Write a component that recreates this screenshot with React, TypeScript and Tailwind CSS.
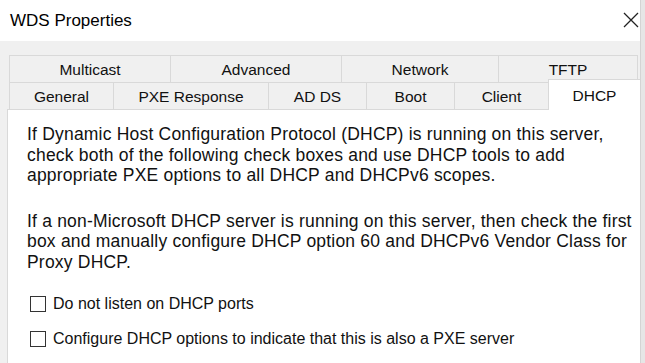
import React from "react";

const Tab = ({ label, w, last }: { label: string; w: string; last?: boolean }) => (
  <div
    className={`${w} h-full flex items-center justify-center border-t border-l border-[#d9d9d9] bg-[#f0f0f0] text-[15.5px] text-[#111] ${last ? "border-r" : ""}`}
  >
    <span className="pt-[1px]">{label}</span>
  </div>
);

const CheckRow = ({ label }: { label: string }) => (
  <div className="flex items-center h-[20px]">
    <div className="w-[16px] h-[16px] border border-[#333] bg-white shrink-0" />
    <span className="ml-[7px] text-[16px] text-[#111] leading-[20px]">{label}</span>
  </div>
);

export default function App() {
  return (
    <div
      className="w-[645px] h-[363px] flex bg-white overflow-hidden"
      style={{ fontFamily: '"Liberation Sans", Arial, sans-serif' }}
    >
      <div className="w-[640px] flex flex-col shrink-0">
        <div className="h-[41px] flex items-center justify-between pl-[10px] pr-[1px] bg-white shrink-0">
          <span className="text-[17px] text-black leading-none">WDS Properties</span>
          <svg width="16" height="16" viewBox="0 0 16 16" className="mb-[1px]">
            <path d="M1 1 L15 15 M15 1 L1 15" stroke="#222" strokeWidth="1.3" fill="none" />
          </svg>
        </div>
        <div className="flex-1 bg-[#f0f0f0] pl-[7px] pt-[14px] flex flex-col">
          <div className="ml-[2px] flex h-[27px] shrink-0">
            <Tab label="Multicast" w="w-[161px]" />
            <Tab label="Advanced" w="w-[171px]" />
            <Tab label="Network" w="w-[157px]" />
            <Tab label="TFTP" w="w-[140px]" last />
          </div>
          <div className="ml-[2px] flex h-[27px] shrink-0">
            <Tab label="General" w="w-[104px]" />
            <Tab label="PXE Response" w="w-[155px]" />
            <Tab label="AD DS" w="w-[98px]" />
            <Tab label="Boot" w="w-[88px]" />
            <Tab label="Client" w="w-[94px]" />
            <div className="relative z-10 -mt-[3px] h-[31px] flex-1 bg-white border-t border-l border-[#d9d9d9] flex justify-center pt-[4px] text-[15.5px] text-[#111]">
              DHCP
            </div>
          </div>
          <div className="flex-1 bg-white border-t border-l border-[#d9d9d9] pl-[19px] pt-[14px] text-[17.5px] tracking-[0.2px] text-[#111] whitespace-nowrap">
            <p className="leading-[20.5px]">
              If Dynamic Host Configuration Protocol (DHCP) is running on this server,
              <br />
              check both of the following check boxes and use DHCP tools to add
              <br />
              appropriate PXE options to all DHCP and DHCPv6 scopes.
            </p>
            <p className="leading-[20.5px] mt-[25px]">
              If a non-Microsoft DHCP server is running on this server, then check the first
              <br />
              box and manually configure DHCP option 60 and DHCPv6 Vendor Class for
              <br />
              Proxy DHCP.
            </p>
            <div className="mt-[22px] flex flex-col gap-[15px] pl-[3px] tracking-normal">
              <CheckRow label="Do not listen on DHCP ports" />
              <CheckRow label="Configure DHCP options to indicate that this is also a PXE server" />
            </div>
          </div>
        </div>
      </div>
      <div className="flex-1 bg-[#e6e6e6] border-l border-[#d4d4d4]" />
    </div>
  );
}
